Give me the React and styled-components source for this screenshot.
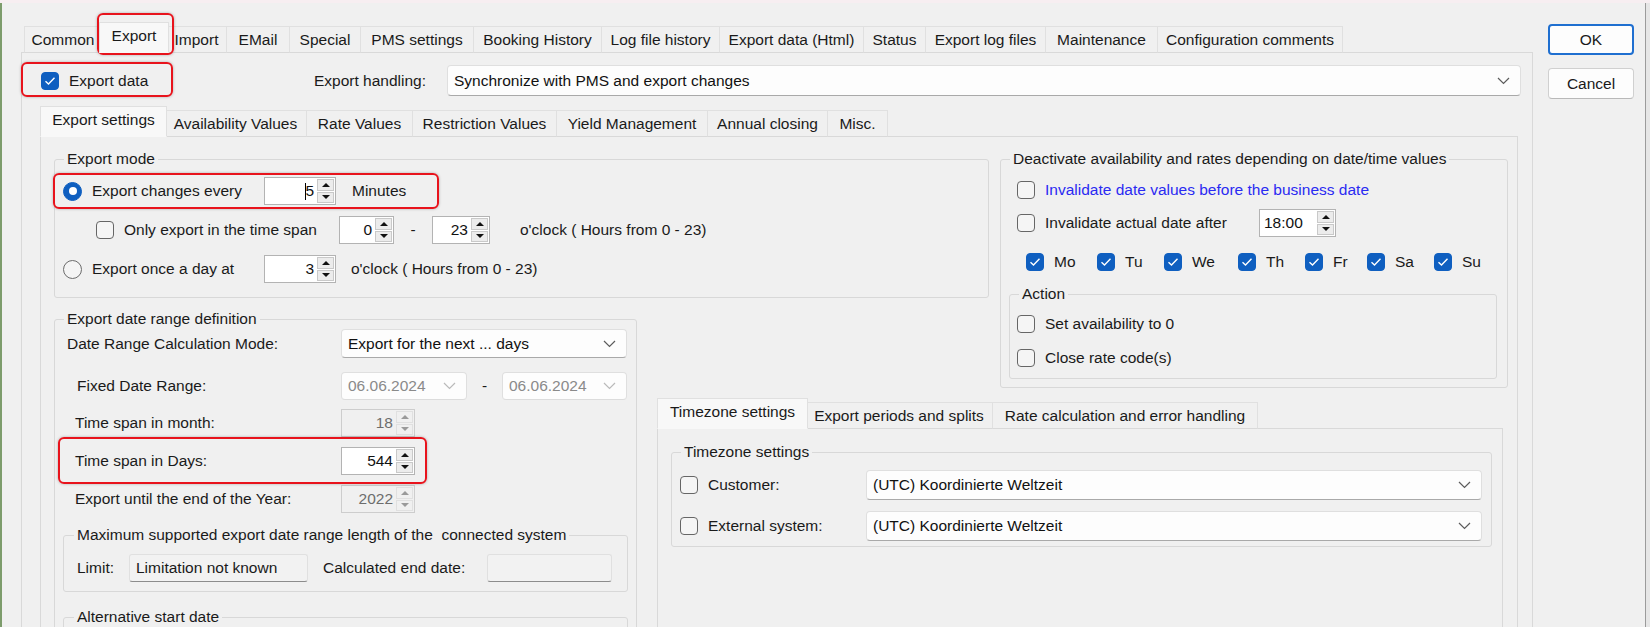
import React from 'react';
import styled, { createGlobalStyle } from 'styled-components';

const GlobalStyle = createGlobalStyle`
  html, body {
    margin: 0;
    padding: 0;
    background: #f0f0f0;
  }
  body {
    font-family: 'Liberation Sans', Arial, sans-serif;
    font-size: 15.5px;
    color: #1a1a1a;
    overflow: hidden;
  }
  *, *::before, *::after {
    box-sizing: border-box;
  }
`;

const Window = styled.div`
    display: flex;
    align-items: flex-start;
    width: 1650px;
    height: 627px;
    overflow: hidden;
    background: #f0f0f0;
    border-top: 3px solid #f7eef1;
`;

const LeftEdge = styled.div`
    align-self: stretch;
    flex: none;
    width: 2px;
    background: #7d9c6c;
`;

const RightEdge = styled.div`
    align-self: stretch;
    flex: none;
    width: 5px;
    margin-left: auto;
    border-left: 1px solid #9b9b9b;
    background: #e6e6e6;
`;

const MainArea = styled.div`
    flex: none;
    width: 1512px;
    margin: 19px 0 0 19px;
    display: flex;
    flex-direction: column;
`;

const TabStrip = styled.div`
    display: flex;
    align-items: flex-end;
    height: 31px;
    padding-left: ${p => p.$pad}px;
    margin-bottom: -1px;
    position: relative;
    z-index: 1;
`;

const Tab = styled.div`
    flex: none;
    width: ${p => p.$w + (p.$active ? 5 : 1)}px;
    height: ${p => (p.$active ? 31 : 27)}px;
    margin: ${p => (p.$active ? '0 -3px 0 -2px' : '0 -1px 0 0')};
    padding-bottom: ${p => (p.$active ? 3 : 0)}px;
    display: flex;
    align-items: center;
    justify-content: center;
    white-space: nowrap;
    background: ${p => (p.$active ? '#f8f8f8' : '#f0f0f0')};
    border: 1px solid #e0e0e0;
    border-bottom-color: ${p => (p.$active ? '#f8f8f8' : '#d9d9d9')};
    position: relative;
    z-index: ${p => (p.$active ? 2 : 1)};
`;

const Panel = styled.div`
    border: 1px solid #d9d9d9;
    background: #f0f0f0;
    padding: ${p => p.$pad};
    height: ${p => (p.$h ? `${p.$h}px` : 'auto')};
`;

const Mark = styled.div`
    flex: none;
    display: inline-flex;
    align-items: center;
    position: relative;
    z-index: 3;
    margin: ${p => `-${p.$t}px -${p.$r}px -${p.$b}px -${p.$l}px`};
    padding: ${p => `${p.$t - 2}px ${p.$r - 2}px ${p.$b - 2}px ${p.$l - 2}px`};
    border: 2px solid #e8131c;
    border-radius: 6px;
    box-shadow: 0 0 3px rgba(0, 0, 0, 0.28);
`;

const HeaderRow = styled.div`
    display: flex;
    align-items: center;
    height: 31px;
    margin: 12px -3px 0 1px;
`;

const HeaderLeft = styled.div`
    flex: none;
    width: 273px;
    display: flex;
    align-items: center;
`;

const SubBlock = styled.div`
    margin-top: 10px;
    display: flex;
    flex-direction: column;
`;

const SettingsGrid = styled.div`
    display: grid;
    grid-template-columns: 583px 20px 332px 11px 503px 5px;
    align-items: start;
`;

const Cell = styled.div`
    grid-column: ${p => p.$col};
    grid-row: ${p => p.$row};
    margin-top: ${p => p.$mt || 0}px;
    display: flex;
    flex-direction: column;
`;

const Group = styled.fieldset`
    margin: ${p => p.$m || 0};
    min-width: 0;
    padding: 0 ${p => p.$pr || 0}px ${p => p.$pb || 0}px 0;
    border: 1px solid #d8d8d8;
    border-radius: 3px;
    height: ${p => (p.$h ? `${p.$h}px` : 'auto')};

    & > legend {
        margin-left: ${p => p.$lm || 9}px;
        padding: 0 3px;
        line-height: 18px;
        white-space: nowrap;
    }
`;

const Row = styled.div`
    display: flex;
    align-items: center;
    height: ${p => p.$h || 28}px;
    margin-top: ${p => p.$mt || 0}px;
    padding-left: ${p => p.$pl || 0}px;
`;

const Label = styled.span`
    flex: none;
    white-space: nowrap;
    width: ${p => (p.$w ? `${p.$w}px` : 'auto')};
    margin-left: ${p => p.$ml || 0}px;
    text-align: ${p => (p.$center ? 'center' : 'left')};
`;

const Option = styled.label`
    flex: none;
    display: inline-flex;
    align-items: center;
    gap: 10px;
    height: 28px;
    width: ${p => (p.$w ? `${p.$w}px` : 'auto')};
    white-space: nowrap;
    color: ${p => (p.$link ? '#2a2af2' : 'inherit')};
`;

const Box = styled.span`
    flex: none;
    width: 18px;
    height: 18px;
    border-radius: 4px;
    border: 1px solid ${p => (p.$on ? '#0f5fc0' : '#666666')};
    background: ${p => (p.$on ? '#0f5fc0' : '#f5f5f5')};
    display: inline-flex;
    align-items: center;
    justify-content: center;
`;

const RadioDot = styled.span`
    flex: none;
    width: 19px;
    height: 19px;
    border-radius: 50%;
    border: 1px solid ${p => (p.$on ? '#0f5fc0' : '#6b6b6b')};
    background: ${p => (p.$on ? '#0f5fc0' : '#f4f4f4')};
    display: inline-flex;
    align-items: center;
    justify-content: center;

    &::after {
        content: '';
        width: 8px;
        height: 8px;
        border-radius: 50%;
        background: #fff;
        display: ${p => (p.$on ? 'block' : 'none')};
    }
`;

const Spin = styled.div`
    flex: none;
    display: flex;
    width: ${p => p.$w}px;
    height: 28px;
    border: 1px solid ${p => (p.$off ? '#cdcdcd' : '#b3b3b3')};
    background: ${p => (p.$off ? '#f0f0f0' : '#ffffff')};
    color: ${p => (p.$off ? '#6d6d6d' : '#111')};
`;

const SpinText = styled.div`
    flex: 1;
    display: flex;
    align-items: center;
    justify-content: ${p => (p.$left ? 'flex-start' : 'flex-end')};
    padding: 0 2px 0 4px;
`;

const Caret = styled.span`
    width: 1px;
    height: 17px;
    background: #000;
    margin-right: -1px;
`;

const SpinBtns = styled.div`
    flex: none;
    width: 19px;
    display: flex;
    flex-direction: column;
    gap: 1px;
    padding: 1px;
`;

const SpinBtn = styled.div`
    flex: 1;
    display: flex;
    align-items: center;
    justify-content: center;
    background: ${p => (p.$off ? '#f0f0f0' : '#ececec')};
    border: 1px solid ${p => (p.$off ? '#e0e0e0' : '#c9c9c9')};

    &::after {
        content: '';
        border-left: 4px solid transparent;
        border-right: 4px solid transparent;
        ${p => (p.$down ? 'border-top' : 'border-bottom')}: 4px solid ${p => (p.$off ? '#9a9a9a' : '#111')};
    }
`;

const Combo = styled.div`
    display: flex;
    align-items: center;
    flex: ${p => (p.$w ? 'none' : 1)};
    width: ${p => (p.$w ? `${p.$w}px` : 'auto')};
    height: ${p => p.$h || 30}px;
    padding: 0 10px 0 6px;
    background: #fdfdfd;
    border: 1px solid #dfdfdf;
    border-bottom-color: ${p => (p.$off ? '#dcdcdc' : '#a9a9a9')};
    border-radius: 4px;
    color: ${p => (p.$off ? '#8a8a8a' : '#111')};

    span {
        flex: 1;
        white-space: nowrap;
        overflow: hidden;
    }
`;

const ReadBox = styled.div`
    flex: none;
    display: flex;
    align-items: center;
    width: ${p => p.$w}px;
    height: 28px;
    padding: 0 6px;
    background: #f2f2f2;
    border: 1px solid #e0e0e0;
    border-bottom-color: #8c8c8c;
    border-radius: 3px;
    white-space: nowrap;
`;

const ButtonCol = styled.div`
    flex: none;
    display: flex;
    flex-direction: column;
    gap: 13px;
    margin: 21px 0 0 15px;
`;

const Button = styled.div`
    width: 86px;
    height: 31px;
    display: flex;
    align-items: center;
    justify-content: center;
    background: #fdfdfd;
    border: ${p => (p.$default ? '2px solid #1f6fd0' : '1px solid #d0d0d0')};
    border-bottom-color: ${p => (p.$default ? '#1f6fd0' : '#b9b9b9')};
    border-radius: 4px;
`;

function Check({ on, children, w, link }) {
    return (
        <Option $w={w} $link={link}>
            <Box $on={on}>
                {on && (
                    <svg width="12" height="10" viewBox="0 0 12 10">
                        <polyline points="1.5,5.2 4.5,8 10.5,1.8" fill="none" stroke="#fff" strokeWidth="1.4" />
                    </svg>
                )}
            </Box>
            {children}
        </Option>
    );
}

function Radio({ on, children, w }) {
    return (
        <Option $w={w}>
            <RadioDot $on={on} />
            {children}
        </Option>
    );
}

function Spinner({ w, value, off, left, caret }) {
    return (
        <Spin $w={w} $off={off}>
            <SpinText $left={left}>
                {caret && <Caret />}
                {value}
            </SpinText>
            <SpinBtns>
                <SpinBtn $off={off} />
                <SpinBtn $off={off} $down />
            </SpinBtns>
        </Spin>
    );
}

function Chevron({ off }) {
    return (
        <svg width="13" height="8" viewBox="0 0 13 8">
            <polyline points="1,1 6.5,6.5 12,1" fill="none" stroke={off ? '#bababa' : '#5c5c5c'} strokeWidth="1.2" />
        </svg>
    );
}

function Dropdown({ value, w, h, off }) {
    return (
        <Combo $w={w} $h={h} $off={off}>
            <span>{value}</span>
            <Chevron off={off} />
        </Combo>
    );
}

function Tabs({ items, active, pad, mark }) {
    return (
        <TabStrip $pad={pad}>
            {items.map(([name, w]) => {
                const tab = <Tab key={name} $w={w} $active={name === active}>{name}</Tab>;
                if (name === mark) {
                    return (
                        <Mark key={name} $t={9} $r={8} $b={2} $l={4}>
                            {tab}
                        </Mark>
                    );
                }
                return tab;
            })}
        </TabStrip>
    );
}

const mainTabs = [
    ['Common', 77], ['Export', 65], ['Import', 60], ['EMail', 63], ['Special', 71],
    ['PMS settings', 113], ['Booking History', 128], ['Log file history', 118],
    ['Export data (Html)', 144], ['Status', 62], ['Export log files', 120],
    ['Maintenance', 112], ['Configuration comments', 185],
];

const subTabs = [
    ['Export settings', 122], ['Availability Values', 142], ['Rate Values', 106],
    ['Restriction Values', 144], ['Yield Management', 151], ['Annual closing', 120], ['Misc.', 60],
];

const zoneTabs = [
    ['Timezone settings', 146], ['Export periods and splits', 187], ['Rate calculation and error handling', 265],
];

const days = [['Mo', 71], ['Tu', 67], ['We', 74], ['Th', 67], ['Fr', 62], ['Sa', 67], ['Su', 0]];

export default function App() {
    return (
        <>
            <GlobalStyle />
            <Window>
                <LeftEdge />
                <MainArea>
                    <Tabs items={mainTabs} active="Export" pad={3} mark="Export" />
                    <Panel $pad="0 14px 40px 18px">
                        <HeaderRow>
                            <HeaderLeft>
                                <Mark $t={5} $r={25} $b={2} $l={20}>
                                    <Check on>Export data</Check>
                                </Mark>
                            </HeaderLeft>
                            <Label $w={133}>Export handling:</Label>
                            <Dropdown value="Synchronize with PMS and export changes" h={31} />
                        </HeaderRow>

                        <SubBlock>
                            <Tabs items={subTabs} active="Export settings" pad={2} />
                            <Panel $pad="13px 9px 30px 13px">
                                <SettingsGrid>
                                    <Cell $col="1 / 4" $row="1">
                                        <Group $pb={14}>
                                            <legend>Export mode</legend>
                                            <Row $mt={9} $pl={8}>
                                                <Mark $t={4} $r={33} $b={4} $l={10}>
                                                    <Radio on w={201}>Export changes every</Radio>
                                                    <Spinner w={72} value="5" caret />
                                                    <Label $ml={16}>Minutes</Label>
                                                </Mark>
                                            </Row>
                                            <Row $mt={11} $pl={41}>
                                                <Check w={243}>Only export in the time span</Check>
                                                <Spinner w={55} value="0" />
                                                <Label $w={38} $center>-</Label>
                                                <Spinner w={58} value="23" />
                                                <Label $ml={30}>o'clock ( Hours from 0 - 23)</Label>
                                            </Row>
                                            <Row $mt={11} $pl={8}>
                                                <Radio w={201}>Export once a day at</Radio>
                                                <Spinner w={72} value="3" />
                                                <Label $ml={15}>o'clock ( Hours from 0 - 23)</Label>
                                            </Row>
                                        </Group>
                                    </Cell>

                                    <Cell $col="5 / 7" $row="1 / 3">
                                        <Group $pb={8}>
                                            <legend>Deactivate availability and rates depending on date/time values</legend>
                                            <Row $mt={8} $pl={16}>
                                                <Check link>Invalidate date values before the business date</Check>
                                            </Row>
                                            <Row $mt={5} $pl={16}>
                                                <Check w={242}>Invalidate actual date after</Check>
                                                <Spinner w={77} value="18:00" left />
                                            </Row>
                                            <Row $mt={11} $pl={25}>
                                                {days.map(([d, w]) => (
                                                    <Check key={d} on w={w || undefined}>{d}</Check>
                                                ))}
                                            </Row>
                                            <Group $m="9px 10px 0 8px" $pb={6}>
                                                <legend>Action</legend>
                                                <Row $mt={7} $pl={7}>
                                                    <Check>Set availability to 0</Check>
                                                </Row>
                                                <Row $mt={6} $pl={7}>
                                                    <Check>Close rate code(s)</Check>
                                                </Row>
                                            </Group>
                                        </Group>
                                    </Cell>

                                    <Cell $col="1 / 2" $row="2 / 4" $mt={12}>
                                        <Group $pb={10}>
                                            <legend>Export date range definition</legend>
                                            <Row $mt={1} $h={29} $pl={12}>
                                                <Label $w={274}>Date Range Calculation Mode:</Label>
                                                <Dropdown value="Export for the next ... days" w={286} h={29} />
                                            </Row>
                                            <Row $mt={14} $pl={22}>
                                                <Label $w={264}>Fixed Date Range:</Label>
                                                <Dropdown value="06.06.2024" w={126} h={28} off />
                                                <Label $w={35} $center>-</Label>
                                                <Dropdown value="06.06.2024" w={125} h={28} off />
                                            </Row>
                                            <Row $mt={9} $pl={20}>
                                                <Label $w={266}>Time span in month:</Label>
                                                <Spinner w={74} value="18" off />
                                            </Row>
                                            <Row $mt={10} $pl={20}>
                                                <Mark $t={10} $r={12} $b={9} $l={17}>
                                                    <Label $w={266}>Time span in Days:</Label>
                                                    <Spinner w={74} value="544" />
                                                </Mark>
                                            </Row>
                                            <Row $mt={10} $pl={20}>
                                                <Label $w={266}>Export until the end of the Year:</Label>
                                                <Spinner w={74} value="2022" off />
                                            </Row>
                                            <Group $m="13px 8px 0 8px" $pb={9} $lm={10}>
                                                <legend>Maximum supported export date range length of the{'\u00a0'} connected system</legend>
                                                <Row $mt={10} $pl={13}>
                                                    <Label $w={52}>Limit:</Label>
                                                    <ReadBox $w={179}>Limitation not known</ReadBox>
                                                    <Label $w={164} $ml={15}>Calculated end date:</Label>
                                                    <ReadBox $w={125} />
                                                </Row>
                                            </Group>
                                            <Group $m="16px 8px 0 8px" $h={60} $lm={10}>
                                                <legend>Alternative start date</legend>
                                            </Group>
                                        </Group>
                                    </Cell>

                                    <Cell $col="3 / 6" $row="3" $mt={10}>
                                        <Tabs items={zoneTabs} active="Timezone settings" pad={2} />
                                        <Panel $pad="14px 10px 0 13px" $h={260}>
                                            <Group $pb={5} $pr={9}>
                                                <legend>Timezone settings</legend>
                                                <Row $mt={9} $h={30} $pl={8}>
                                                    <Check w={186}>Customer:</Check>
                                                    <Dropdown value="(UTC) Koordinierte Weltzeit" />
                                                </Row>
                                                <Row $mt={11} $h={30} $pl={8}>
                                                    <Check w={186}>External system:</Check>
                                                    <Dropdown value="(UTC) Koordinierte Weltzeit" />
                                                </Row>
                                            </Group>
                                        </Panel>
                                    </Cell>
                                </SettingsGrid>
                            </Panel>
                        </SubBlock>
                    </Panel>
                </MainArea>
                <ButtonCol>
                    <Button $default>OK</Button>
                    <Button>Cancel</Button>
                </ButtonCol>
                <RightEdge />
            </Window>
        </>
    );
}
